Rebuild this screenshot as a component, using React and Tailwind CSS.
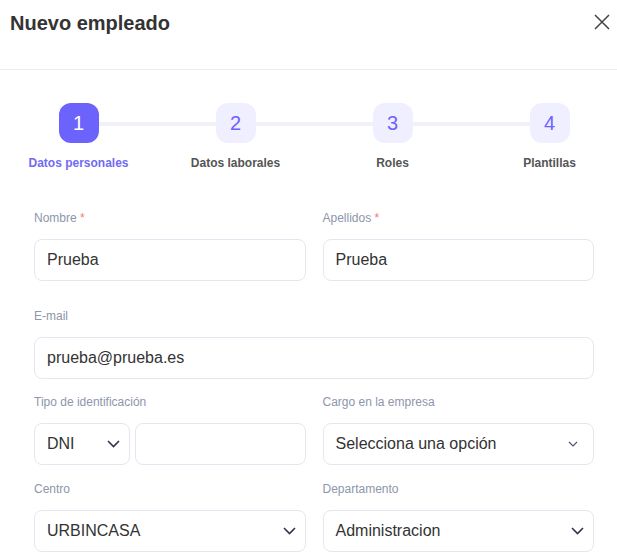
import React from 'react';

const steps = ['Datos personales', 'Datos laborales', 'Roles', 'Plantillas'];

const Chevron = ({ small }) =>
  small ? (
    <svg width="10" height="6" viewBox="0 0 10 6" fill="none" stroke="#4b5068" strokeWidth="1.1">
      <path d="M1 1l4 4 4-4" />
    </svg>
  ) : (
    <svg width="13" height="8" viewBox="0 0 13 8" fill="none" stroke="#2d3450" strokeWidth="1.6">
      <path d="M1 1l5.5 5.5L12 1" />
    </svg>
  );

const Label = ({ children, required }) => (
  <div className="text-[12px] leading-4 text-[#8d96ab] mb-[13px]">
    {children}
    {required && <span className="text-[#f07a7a]"> *</span>}
  </div>
);

const Input = ({ value, className = '' }) => (
  <div className={`h-[42px] border border-[#e3e7ef] rounded-lg px-[12px] flex items-center text-[16px] text-[#333] ${className}`}>
    {value}
  </div>
);

const Select = ({ value, small, className = '' }) => (
  <div className={`h-[42px] border border-[#e3e7ef] rounded-lg pl-[12px] pr-[9px] flex items-center justify-between text-[16px] text-[#333] ${className}`}>
    <span>{value}</span>
    <Chevron small={small} />
  </div>
);

export default function App() {
  return (
    <div className="w-[617px] h-[555px] bg-white overflow-hidden" style={{ fontFamily: '"Liberation Sans", Arial, sans-serif' }}>
      <div className="h-[70px] border-b border-[#ededed] flex items-start justify-between pl-[10px] pr-[4px] pt-[11px]">
        <h1 className="text-[20px] font-bold text-[#333] leading-6">Nuevo empleado</h1>
        <svg width="22" height="22" viewBox="0 0 22 22" fill="none" stroke="#444" strokeWidth="1.5">
          <path d="M4 4l14 14M18 4L4 18" />
        </svg>
      </div>

      <div className="relative mt-[33px] w-[628px]">
        <div className="absolute left-[98px] right-[78px] top-[19px] h-[4px] bg-[#f1f1f7]" />
        <div className="relative grid grid-cols-4">
          {steps.map((s, i) => (
            <div key={s} className="flex flex-col items-center">
              <div
                className={`w-10 h-10 rounded-xl flex items-center justify-center text-[20px] ${
                  i === 0 ? 'bg-[#6c63fd] text-white' : 'bg-[#f0efff] text-[#6c63fd]'
                }`}
              >
                {i + 1}
              </div>
              <div className={`mt-[12px] text-[12px] font-bold leading-4 ${i === 0 ? 'text-[#716af6]' : 'text-[#555]'}`}>{s}</div>
            </div>
          ))}
        </div>
      </div>

      <div className="px-[34px] pr-[23px] mt-[39px]">
        <div className="grid grid-cols-2 gap-x-[17px]">
          <div>
            <Label required>Nombre</Label>
            <Input value="Prueba" />
          </div>
          <div>
            <Label required>Apellidos</Label>
            <Input value="Prueba" />
          </div>
        </div>

        <div className="mt-[27px]">
          <Label>E-mail</Label>
          <Input value="prueba@prueba.es" />
        </div>

        <div className="grid grid-cols-2 gap-x-[17px] mt-[15px]">
          <div>
            <Label>Tipo de identificación</Label>
            <div className="flex gap-[5px]">
              <Select value="DNI" className="w-[96px]" />
              <Input value="" className="flex-1" />
            </div>
          </div>
          <div>
            <Label>Cargo en la empresa</Label>
            <Select value="Selecciona una opción" small className="pr-[15px]" />
          </div>
        </div>

        <div className="grid grid-cols-2 gap-x-[17px] mt-[16px]">
          <div>
            <Label>Centro</Label>
            <Select value="URBINCASA" />
          </div>
          <div>
            <Label>Departamento</Label>
            <Select value="Administracion" />
          </div>
        </div>
      </div>
    </div>
  );
}
